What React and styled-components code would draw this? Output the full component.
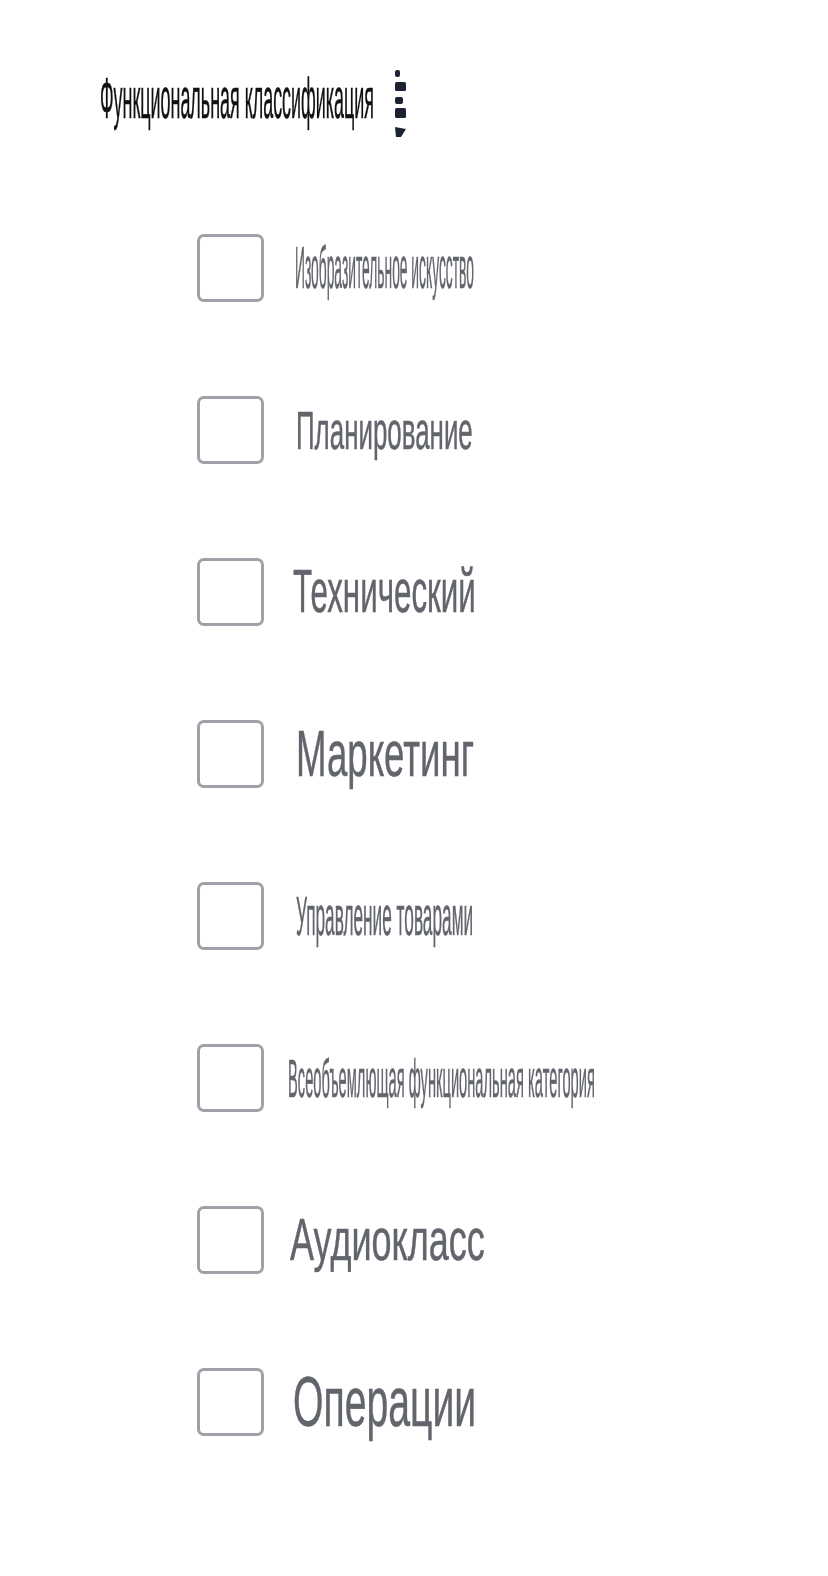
import { useLayoutEffect, useRef, useState } from 'react'
import styled, { createGlobalStyle } from 'styled-components'

const GlobalStyle = createGlobalStyle`
  html, body {
    margin: 0;
    padding: 0;
    background: #ffffff;
    overflow: hidden;
  }
  body {
    font-family: "Liberation Sans", Arial, sans-serif;
  }
`

const Page = styled.div`
  width: 828px;
  min-height: 1576px;
  background: #fff;
`

const Header = styled.div`
  box-sizing: border-box;
  height: 187px;
  padding: 10px 0 0 100px;
  display: flex;
  align-items: center;
  gap: 19px;
`

const FitBox = styled.div`
  flex: none;
  width: ${({ $w }) => $w}px;
  overflow: hidden;
  margin-left: ${({ $shift }) => $shift || 0}px;
`

const FitInner = styled.span`
  display: inline-block;
  white-space: nowrap;
  transform-origin: left center;
  font-size: ${({ $size }) => $size}px;
  line-height: 1.2;
  color: ${({ $color }) => $color};
  -webkit-text-stroke: 0.5px ${({ $color }) => $color};
`

const Kebab = styled.svg`
  flex: none;
  display: block;
  margin-top: 8px;
`

const List = styled.div`
  padding-left: 197px;
  display: flex;
  flex-direction: column;
`

const Row = styled.label`
  height: 162px;
  display: flex;
  align-items: center;
  cursor: pointer;
`

const Box = styled.span`
  box-sizing: border-box;
  flex: none;
  width: 67px;
  height: 68px;
  border: 3px solid #9ea2a8;
  border-radius: 7px;
  background: #fff;
  margin-right: 30px;
`

const FitText = ({ width, size, color, shift, children }) => {
  const ref = useRef(null)
  const [scale, setScale] = useState(1)

  useLayoutEffect(() => {
    if (ref.current) {
      const natural = ref.current.offsetWidth
      if (natural) setScale(width / natural)
    }
  }, [width, size, children])

  return (
    <FitBox $w={width} $shift={shift}>
      <FitInner
        ref={ref}
        $size={size}
        $color={color}
        style={{ transform: `scaleX(${scale})` }}
      >
        {children}
      </FitInner>
    </FitBox>
  )
}

const items = [
  { label: 'Изобразительное искусство', width: 179, size: 60, shift: 1 },
  { label: 'Планирование', width: 177, size: 54, shift: 2 },
  { label: 'Технический', width: 183, size: 61, shift: -1 },
  { label: 'Маркетинг', width: 178, size: 65, shift: 2 },
  { label: 'Управление товарами', width: 177, size: 56, shift: 2 },
  { label: 'Всеобъемлющая функциональная категория', width: 307, size: 54, shift: -6 },
  { label: 'Аудиокласс', width: 195, size: 60, shift: -4 },
  { label: 'Операции', width: 183, size: 70, shift: -1 },
]

const App = () => (
  <Page>
    <GlobalStyle />
    <Header>
      <FitText width={274} size={57} color="#111111">
        Функциональная классификация
      </FitText>
      <Kebab width="16" height="72" viewBox="0 0 16 72">
        <defs>
          <filter id="soft" x="-50%" y="-20%" width="200%" height="140%">
            <feGaussianBlur stdDeviation="0.6" />
          </filter>
        </defs>
        <g fill="#1d2430" filter="url(#soft)">
          <rect x="2" y="3" width="5" height="7" rx="2" />
          <rect x="2" y="15" width="11" height="9" rx="1.5" />
          <rect x="2" y="30" width="8" height="7" rx="2" />
          <rect x="2" y="41" width="11" height="10" rx="1.5" />
          <path d="M2 60 L13 62 L8 70 L3 70 Z" />
        </g>
      </Kebab>
    </Header>
    <List>
      {items.map(item => (
        <Row key={item.label}>
          <Box />
          <FitText width={item.width} size={item.size} color="#62656c" shift={item.shift}>
            {item.label}
          </FitText>
        </Row>
      ))}
    </List>
  </Page>
)

export default App
